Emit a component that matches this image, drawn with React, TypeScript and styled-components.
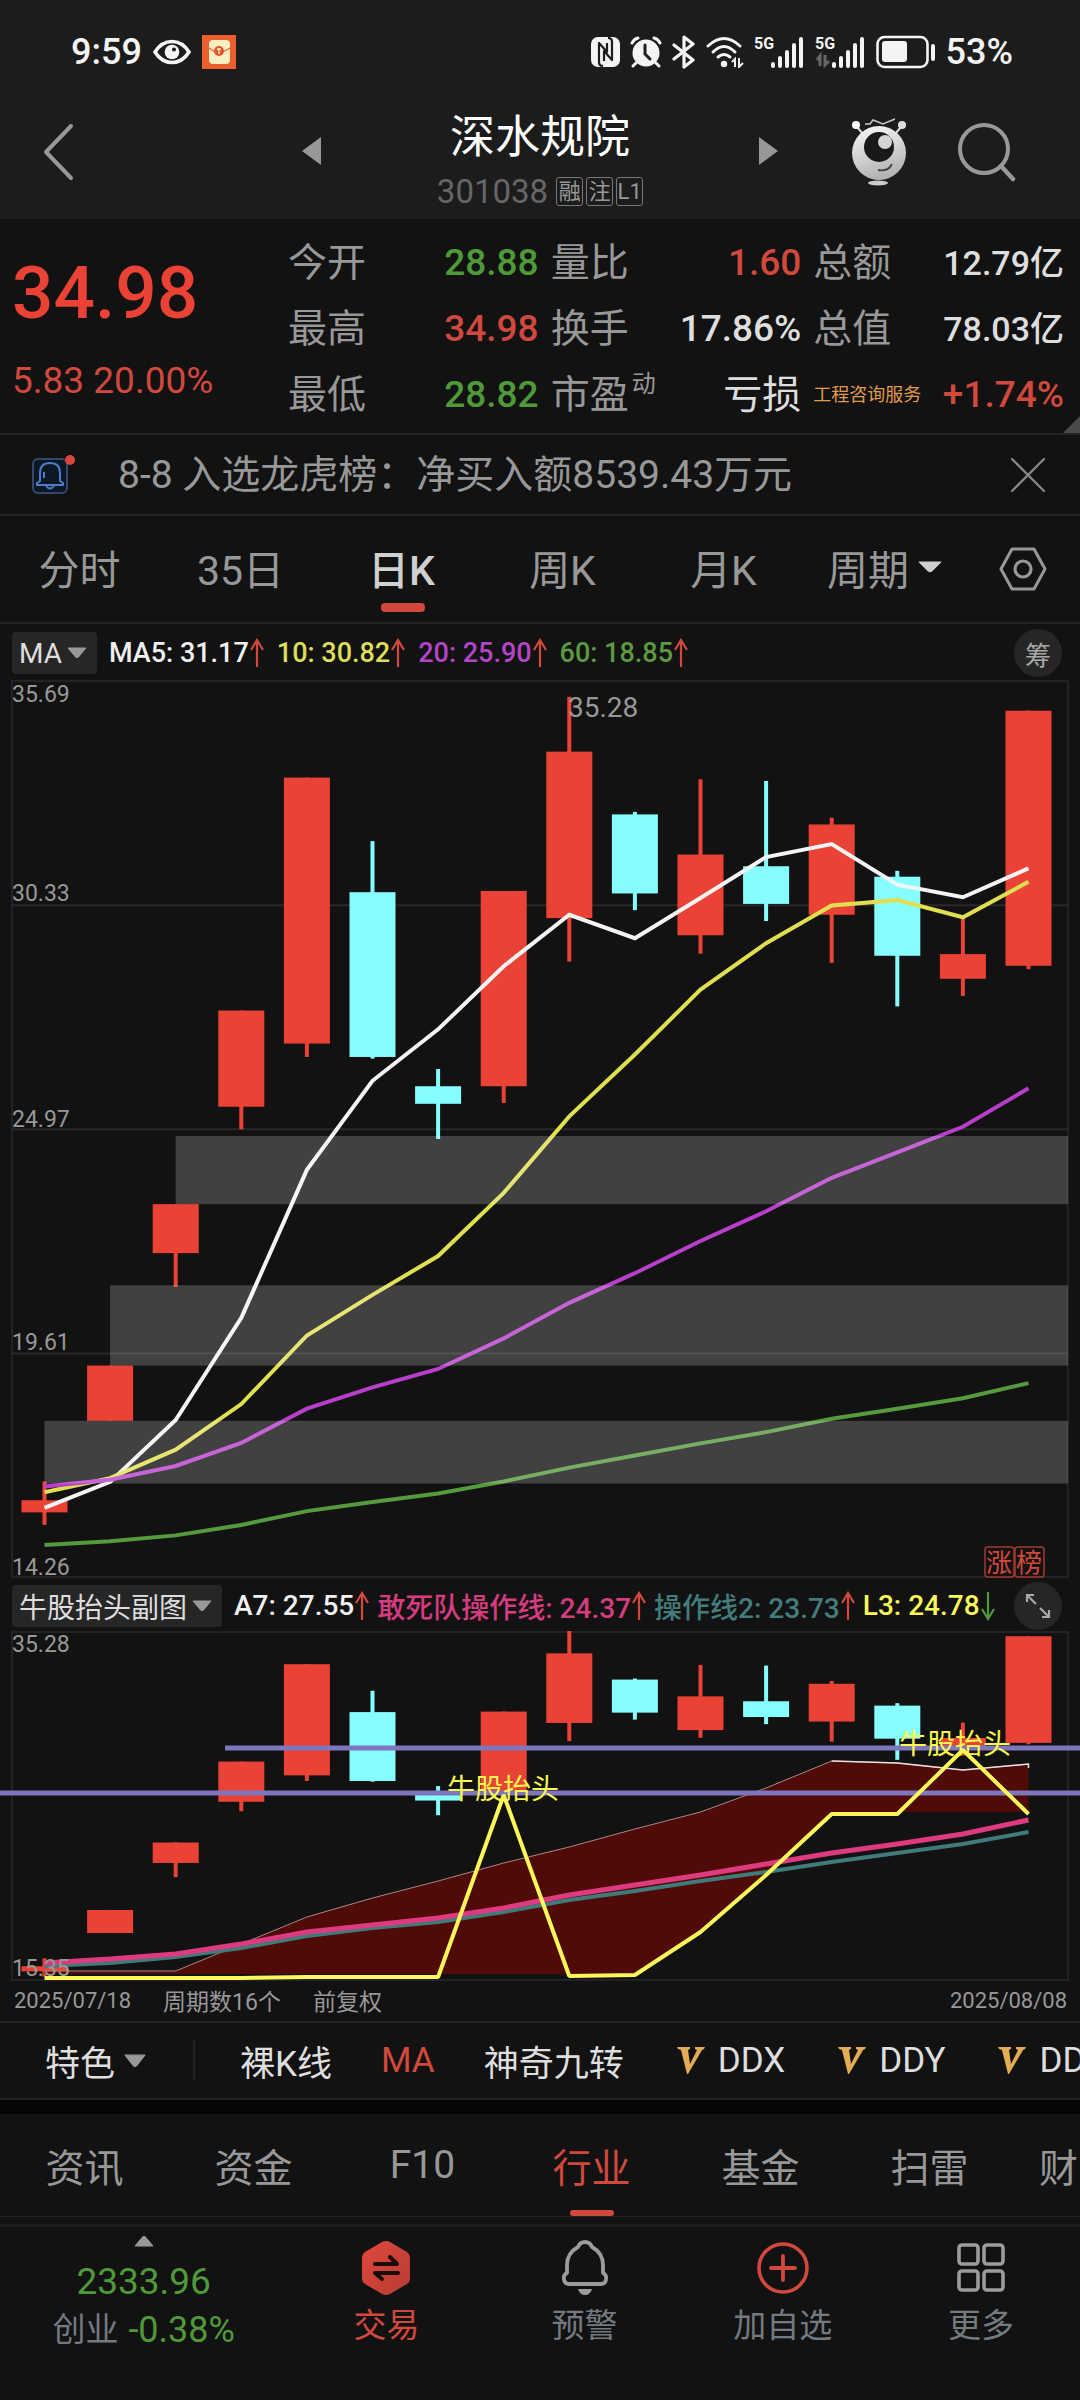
import React from 'react';
import styled, { createGlobalStyle } from 'styled-components';

const color = {
  page: '#121212',
  header: '#1c1c1c',
  line: '#232323',
  chip: '#262626',
  grey: '#989898',
  slate: '#737a80',
  light: '#dedede',
  red: '#d1483d',
  candleRed: '#ea4335',
  candleCyan: '#86feff',
  green: '#4f9a38',
};

const GlobalStyle = createGlobalStyle`
  * { box-sizing: border-box; }
  body {
    margin: 0;
    background: ${color.page};
    color: ${color.light};
    font-family: Roboto, "Noto Sans CJK SC", sans-serif;
  }
  button {
    margin: 0;
    padding: 0;
    border: 0;
    background: none;
    color: inherit;
    font: inherit;
    white-space: nowrap;
    cursor: pointer;
  }
  svg { display: block; flex: none; }
  h1, p, dl, dt, dd { margin: 0; font-weight: 400; }
`;

const Page = styled.main`
  display: flex;
  flex-direction: column;
  min-height: 100vh;
  overflow: hidden;
`;

/* ---------- header ---------- */

const Header = styled.header`
  background: ${color.header};
`;

const StatusBar = styled.div`
  display: flex;
  align-items: center;
  justify-content: space-between;
  height: 104px;
  padding: 0 67px 0 71px;
  color: #f4f4f4;
  font-size: 36px;
  font-weight: 500;
`;

const StatusGroup = styled.div<{ $gap: number }>`
  display: flex;
  align-items: center;
  gap: ${(p) => p.$gap}px;
`;

const TitleBar = styled.div`
  display: flex;
  align-items: center;
  height: 115px;
`;

const TitleSide = styled.div<{ $end?: boolean }>`
  display: flex;
  flex: 1;
  align-items: center;
  justify-content: ${(p) => (p.$end ? 'flex-end' : 'flex-start')};
  gap: 48px;
  padding: 0 64px 19px 42px;
`;

const TitleCenter = styled.div`
  display: flex;
  align-items: center;
  justify-content: space-between;
  width: 476px;
`;

const StepButton = styled.button`
  padding-bottom: 21px;
`;

const TitleBlock = styled.div`
  display: flex;
  flex-direction: column;
  align-items: center;
`;

const StockName = styled.h1`
  color: #fff;
  font-size: 45px;
  line-height: 60px;
`;

const CodeRow = styled.div`
  display: flex;
  align-items: center;
  gap: 3px;
  height: 48px;
  color: #666;
  font-size: 33px;
`;

const Code = styled.span`
  margin-right: 5px;
`;

const CodeTag = styled.span`
  width: 27px;
  height: 29px;
  border: 1px solid #777;
  border-radius: 3px;
  color: ${color.grey};
  font-size: 22px;
  line-height: 27px;
  text-align: center;
`;

/* ---------- quote ---------- */

const Quote = styled.section`
  position: relative;
  display: flex;
  height: 216px;
  padding: 11px 16px 0 12px;
  border-bottom: 2px solid ${color.line};
`;

const PriceColumn = styled.div`
  width: 276px;
  padding-top: 19px;
  color: ${color.red};
`;

const Price = styled.p`
  margin-bottom: 22px;
  color: ${color.candleRed};
  font-size: 73px;
  font-weight: 500;
  line-height: 88px;
`;

const Change = styled.p`
  font-size: 37px;
  line-height: 44px;
`;

const Stats = styled.dl`
  display: grid;
  flex: 1;
  grid-template-columns: repeat(3, 1fr);
  grid-auto-rows: 66px;
  column-gap: 12px;
`;

const Stat = styled.div`
  display: flex;
  align-items: center;
  justify-content: space-between;
  line-height: 66px;
  white-space: nowrap;
`;

const StatLabel = styled.dt<{ $small?: boolean }>`
  color: ${(p) => (p.$small ? '#e09b4c' : color.grey)};
  font-size: ${(p) => (p.$small ? 18 : 39)}px;
`;

const Sup = styled.sup`
  margin-left: 3px;
  font-size: 24px;
  line-height: 24px;
  vertical-align: 16px;
`;

const StatValue = styled.dd<{ $tone: string; $small?: boolean; $cjk?: boolean }>`
  height: 66px;
  color: ${(p) => p.$tone};
  font-size: ${(p) => (p.$cjk ? 39 : p.$small ? 34 : 37)}px;
  font-weight: ${(p) => (p.$cjk ? 400 : 500)};
`;

const Corner = styled.span`
  position: absolute;
  right: 0;
  bottom: 0;
  border-bottom: 17px solid #4a4a4a;
  border-left: 17px solid transparent;
`;

const Notice = styled.section`
  display: flex;
  align-items: center;
  height: 81px;
  padding: 0 34px 0 30px;
  border-bottom: 2px solid ${color.line};
  color: ${color.grey};
`;

const NoticeLink = styled.a`
  flex: 1;
  margin-left: 40px;
  color: inherit;
  font-size: 39px;
  line-height: 78px;
  text-decoration: none;
`;

/* ---------- period tabs ---------- */

const PeriodTabs = styled.nav`
  display: flex;
  height: 108px;
  border-bottom: 2px solid ${color.line};
`;

const Tab = styled.button<{ $active?: boolean }>`
  position: relative;
  display: flex;
  flex: 1;
  align-items: center;
  justify-content: center;
  gap: 9px;
  padding: 0 2px 4px 0;
  color: ${(p) => (p.$active ? '#d0d0d0' : color.grey)};
  font-size: 41px;
  font-weight: ${(p) => (p.$active ? 500 : 400)};
`;

const Underline = styled.span`
  position: absolute;
  bottom: 10px;
  left: calc(50% - 22px);
  width: 44px;
  height: 9px;
  border-radius: 4px;
  background: ${color.red};
`;

const SettingsButton = styled.button`
  display: flex;
  align-items: center;
  justify-content: center;
  width: 114px;
`;

/* ---------- charts ---------- */

const IndicatorRow = styled.div<{ $height: number; $size: number }>`
  display: flex;
  align-items: center;
  gap: 12px;
  height: ${(p) => p.$height}px;
  padding: 2px 18px 0 12px;
  font-size: ${(p) => p.$size}px;
  white-space: nowrap;
`;

const Chip = styled.button`
  display: flex;
  align-items: center;
  gap: 5px;
  height: 42px;
  padding: 0 10px 0 7px;
  border-radius: 4px;
  background: ${color.chip};
  font-size: 28px;
`;

const Readings = styled.div<{ $gap: number }>`
  display: flex;
  gap: ${(p) => p.$gap}px;
`;

const Reading = styled.span<{ $tone: string }>`
  display: flex;
  align-items: center;
  gap: 1px;
  color: ${(p) => p.$tone};
  font-weight: 500;
`;

const RoundButton = styled.button`
  display: flex;
  align-items: center;
  justify-content: center;
  width: 48px;
  height: 48px;
  margin-left: auto;
  border-radius: 50%;
  background: ${color.chip};
  color: #a8a8a8;
  font-size: 26px;
`;

const ChartBox = styled.div`
  svg {
    width: 100%;
    height: auto;
  }
`;

const ChartFooter = styled.div`
  display: flex;
  align-items: center;
  gap: 32px;
  height: 42px;
  padding: 0 13px 2px 14px;
  border-bottom: 2px solid ${color.line};
  color: ${color.grey};
  font-size: 23px;
`;

const FooterDate = styled.time<{ $end?: boolean }>`
  margin-left: ${(p) => (p.$end ? 'auto' : '0')};
  font-size: 22px;
`;

/* ---------- feature strip and section tabs ---------- */

const FeatureStrip = styled.div`
  display: flex;
  align-items: center;
  height: 77px;
  padding-left: 45px;
  overflow: hidden;
  border-bottom: 2px solid ${color.line};
  font-size: 35px;
`;

const FeaturePicker = styled.button`
  display: flex;
  align-items: center;
  gap: 9px;
  height: 41px;
  padding-right: 47px;
  border-right: 2px solid ${color.line};
`;

const Features = styled.div`
  display: flex;
  gap: 49px;
  padding-left: 45px;
`;

const Feature = styled.button<{ $active?: boolean; $vip?: boolean }>`
  display: flex;
  flex: none;
  align-items: center;
  gap: 13px;
  padding-left: ${(p) => (p.$vip ? 4 : 0)}px;
  color: ${(p) => (p.$active ? color.red : color.light)};
`;

const Gap = styled.div`
  height: 14px;
  background: #060606;
`;

const SectionTabs = styled.nav`
  display: flex;
  height: 103px;
  overflow: hidden;
  border-bottom: 1px solid ${color.line};
`;

const SectionTab = styled.button<{ $active?: boolean }>`
  position: relative;
  flex: 0 0 169px;
  color: ${(p) => (p.$active ? color.red : color.grey)};
  font-size: 39px;

  &:last-child {
    flex-basis: auto;
    padding-left: 25px;
  }
`;

const SectionUnderline = styled(Underline)`
  bottom: 0;
  height: 6px;
  border-radius: 3px;
`;

/* ---------- bottom bar ---------- */

const BottomBar = styled.nav`
  display: grid;
  flex: 1;
  grid-template-columns: 29fr repeat(4, 20fr);
  align-items: start;
  margin-top: 7px;
  padding-top: 8px;
  border-top: 3px solid #1c1c1c;
`;

const IndexButton = styled.button`
  display: flex;
  flex-direction: column;
  align-items: center;
  color: ${color.green};
`;

const IndexValue = styled.span`
  margin-top: 13px;
  font-size: 37px;
  line-height: 44px;
`;

const IndexChange = styled.span`
  display: flex;
  align-items: center;
  gap: 10px;
  margin-top: 4px;
  font-size: 36px;
  line-height: 44px;
`;

const IndexName = styled.span`
  color: ${color.slate};
  font-size: 33px;
`;

const Action = styled.button<{ $active?: boolean }>`
  display: flex;
  flex-direction: column;
  align-items: center;
  gap: 6px;
  padding-top: 5px;
  color: ${(p) => (p.$active ? color.red : color.slate)};
  font-size: 33px;
  line-height: 48px;
`;

/* ---------- icons ---------- */

const Caret = ({ w, h, fill = color.grey, up }: { w: number; h: number; fill?: string; up?: boolean }) => (
  <svg width={w} height={h} viewBox="0 0 20 12" preserveAspectRatio="none" aria-hidden="true">
    <path
      d={up ? 'M1 11H19L11.500 2Q10 .5 8.500 2Z' : 'M1 1H19L11.500 10Q10 11.500 8.500 10Z'}
      fill={fill}
      stroke={fill}
      strokeLinejoin="round"
    />
  </svg>
);

const Trend = ({ down }: { down?: boolean }) => (
  <svg width="14" height="30" viewBox="0 0 14 30" aria-hidden="true">
    <path
      d={down ? 'M7 1V28M1 18L7 28L13 18' : 'M7 29V2M1 12L7 2L13 12'}
      fill="none"
      stroke={down ? '#4f9a38' : '#d1483d'}
      strokeWidth="2.200"
    />
  </svg>
);

const EyeIcon = () => (
  <svg width="40" height="28" viewBox="0 0 40 28" aria-hidden="true">
    <path d="M3 14C8 6 14 3.500 20 3.500S32 6 37 14C32 22 26 24.500 20 24.500S8 22 3 14Z" fill="none" stroke="#f4f4f4" strokeWidth="3.600" />
    <circle cx="20" cy="14" r="7.300" fill="#f4f4f4" />
    <circle cx="22" cy="11.500" r="2" fill={color.header} />
  </svg>
);

const EnvelopeIcon = () => (
  <svg width="34" height="34" viewBox="0 0 34 34" aria-hidden="true">
    <rect width="34" height="34" fill="#ea5f2d" />
    <rect x="7" y="5" width="21" height="24" rx="4" fill="#fdeec0" />
    <path d="M7 13Q17 21 28 13" fill="none" stroke="#e0683a" strokeWidth="1.500" />
    <circle cx="17" cy="16" r="5" fill="#d9592a" />
    <path d="M15 14H19M17 14V19" stroke="#fdeec0" strokeWidth="1.400" />
  </svg>
);

const NfcIcon = () => (
  <svg width="29" height="30" viewBox="0 0 29 30" aria-hidden="true">
    <rect width="29" height="30" rx="7" fill="#f4f4f4" />
    <path
      d="M13 24V14L21 23V5Q21 1 17 1M16 6V15L8 6V25Q8 29 12 29"
      fill="none"
      stroke={color.header}
      strokeWidth="2.200"
      strokeLinejoin="round"
    />
  </svg>
);

const AlarmIcon = () => (
  <svg width="32" height="32" viewBox="0 0 32 32" aria-hidden="true">
    <circle cx="16" cy="17" r="13.500" fill="#f4f4f4" />
    <path d="M2 7Q4 3 8 2M30 7Q28 3 24 2M6 27L3 30M26 27L29 30" stroke="#f4f4f4" strokeWidth="3" strokeLinecap="round" fill="none" />
    <path d="M15 9V18L20 23" fill="none" stroke={color.header} strokeWidth="3" strokeLinecap="round" />
  </svg>
);

const BluetoothIcon = () => (
  <svg width="24" height="34" viewBox="0 0 24 34" aria-hidden="true">
    <path d="M2 10L21 25L12 32V2L21 9L2 24" fill="none" stroke="#f4f4f4" strokeWidth="3.200" strokeLinejoin="round" strokeLinecap="round" />
  </svg>
);

const WifiIcon = () => (
  <svg width="38" height="32" viewBox="0 0 38 32" aria-hidden="true">
    <g fill="none" stroke="#f4f4f4" strokeWidth="3" strokeLinecap="round">
      <path d="M2 10Q18 -5 34 10" />
      <path d="M7 16Q18 5 29 16" />
      <path d="M12 21Q18 16 24 21" />
    </g>
    <circle cx="18" cy="28" r="3.200" fill="#f4f4f4" />
    <path d="M26 26L29 23V31M37 27L33 31V22" fill="none" stroke="#f4f4f4" strokeWidth="2" />
  </svg>
);

const SignalIcon = ({ transfer }: { transfer?: boolean }) => (
  <svg width="51" height="34" viewBox="0 0 51 34" aria-hidden="true">
    <text x="0" y="14" fill="#f4f4f4" fontSize="16" fontWeight="700">5G</text>
    {transfer && <path d="M2 25L5 21V31M14 26L10 30V20" fill="none" stroke="#666" strokeWidth="3" />}
    {[6, 12, 18, 25, 31].map((h, i) => (
      <rect key={h} x={17 + i * 7} y={33 - h} width="4" height={h} rx="2" fill="#f4f4f4" />
    ))}
  </svg>
);

const BatteryIcon = () => (
  <svg width="60" height="34" viewBox="0 0 60 34" aria-hidden="true">
    <rect x="1.500" y="2" width="50" height="30" rx="7" fill="none" stroke="#f4f4f4" strokeWidth="2.600" />
    <rect x="6" y="6" width="25" height="21" rx="3" fill="#f4f4f4" />
    <rect x="55" y="9" width="4" height="17" rx="2" fill="#f4f4f4" />
  </svg>
);

const BackIcon = () => (
  <svg width="32" height="58" viewBox="0 0 32 58" aria-hidden="true">
    <path d="M29 3L4 29L29 55" fill="none" stroke={color.grey} strokeWidth="4" strokeLinecap="round" strokeLinejoin="round" />
  </svg>
);

const StepIcon = ({ right }: { right?: boolean }) => (
  <svg width="20" height="28" viewBox="0 0 20 28" aria-hidden="true">
    <path d={right ? 'M1 0V28L20 14Z' : 'M19 0V28L0 14Z'} fill={color.grey} />
  </svg>
);

const RobotIcon = () => (
  <svg width="58" height="68" viewBox="0 0 58 68" aria-hidden="true">
    <defs>
      <linearGradient id="ball" x1="0" y1="0" x2="0.300" y2="1">
        <stop offset="0" stopColor="#fafafa" />
        <stop offset="1" stopColor="#b4b4b4" />
      </linearGradient>
    </defs>
    <path d="M15 6H20L23 2L33 6L45 1" fill="none" stroke="#c8c8c8" strokeWidth="1.500" />
    <path d="M6 8L14 17M52 8L44 17" stroke="#ddd" strokeWidth="2" />
    <circle cx="6" cy="7" r="4" fill="#fff" />
    <circle cx="52" cy="7" r="4" fill="#ddd" />
    <circle cx="29" cy="35" r="27" fill="url(#ball)" />
    <circle cx="29" cy="29" r="15" fill="#191919" />
    <circle cx="35" cy="24" r="7" fill="#d4d4d4" />
    <path d="M28 52Q38 54 42 46" fill="none" stroke="#444" strokeWidth="1.800" />
    <ellipse cx="28" cy="65" rx="10" ry="2.500" fill="#ccc" />
  </svg>
);

const SearchIcon = () => (
  <svg width="60" height="60" viewBox="0 0 60 60" aria-hidden="true">
    <circle cx="28" cy="27" r="24" fill="none" stroke={color.grey} strokeWidth="4" />
    <path d="M45 44L57 57" stroke={color.grey} strokeWidth="4.500" strokeLinecap="round" />
  </svg>
);

const NoticeBell = () => (
  <svg width="48" height="42" viewBox="0 0 48 42" aria-hidden="true">
    <rect x="3" y="5" width="34" height="34" rx="5" fill="#0e1726" stroke="#33496b" strokeWidth="2" />
    <g fill="none" stroke="#4a7fc8" strokeWidth="2" strokeLinejoin="round">
      <path d="M10 27V19Q10 9 20 9T30 19V27L33 29V31H7V29Z" />
      <path d="M16 32Q20 37 24 32M14 18V24" />
    </g>
    <circle cx="40" cy="6" r="5" fill="#d9483e" />
  </svg>
);

const CloseIcon = () => (
  <svg width="36" height="36" viewBox="0 0 36 36" aria-hidden="true">
    <path d="M2 2L34 34M34 2L2 34" stroke="#858585" strokeWidth="2.400" strokeLinecap="round" />
  </svg>
);

const HexIcon = () => (
  <svg width="48" height="44" viewBox="0 0 48 44" aria-hidden="true">
    <path d="M13 2H35L46 22L35 42H13L2 22Z" fill="none" stroke={color.grey} strokeWidth="3" strokeLinejoin="round" />
    <circle cx="24" cy="22" r="8" fill="none" stroke={color.grey} strokeWidth="3.200" />
  </svg>
);

const ExpandIcon = () => (
  <svg width="26" height="26" viewBox="0 0 26 26" aria-hidden="true">
    <path d="M11 11L2 2M2 9V2H9M15 15L24 24M24 17V24H17" fill="none" stroke="#a8a8a8" strokeWidth="2.200" />
  </svg>
);

const VipIcon = () => (
  <svg width="28" height="27" viewBox="0 0 28 27" aria-hidden="true">
    <path d="M0 0H13V2L11 3L13 17L20 3L18 2V0H28L27 2L25 3L11 27H10L4 3L1 2Z" fill="#e2ab55" />
  </svg>
);

const TradeIcon = () => (
  <svg width="50" height="56" viewBox="0 0 50 56" aria-hidden="true">
    <defs>
      <linearGradient id="hex" x1="0" y1="0" x2="1" y2="1">
        <stop offset="0" stopColor="#e2483c" />
        <stop offset="1" stopColor="#b53b33" />
      </linearGradient>
    </defs>
    <path d="M21 2Q25 0 29 2L46 12Q49 14 49 17V39Q49 42 46 44L29 54Q25 56 21 54L4 44Q1 42 1 39V17Q1 14 4 12Z" fill="url(#hex)" />
    <path d="M14 24H36L29 17M37 33H14L21 39" fill="none" stroke="#1a0c0b" strokeWidth="4" strokeLinecap="round" strokeLinejoin="round" />
  </svg>
);

const AlertIcon = () => (
  <svg width="50" height="56" viewBox="0 0 50 56" aria-hidden="true">
    <path
      d="M25 2Q30 2 32 7Q43 13 43 25V33Q47 35 46 40Q45 44 41 44H9Q5 44 4 40Q3 35 7 33V25Q7 13 18 7Q20 2 25 2Z"
      fill="none"
      stroke="#9c9c9c"
      strokeWidth="3.800"
      strokeLinejoin="round"
    />
    <path d="M18 49H32Q30 55 25 55T18 49Z" fill="#9c9c9c" />
  </svg>
);

const AddIcon = () => (
  <svg width="54" height="56" viewBox="0 0 54 56" aria-hidden="true">
    <circle cx="27" cy="28" r="24" fill="none" stroke={color.red} strokeWidth="3.600" />
    <path d="M27 16V40M15 28H39" stroke={color.red} strokeWidth="3.800" strokeLinecap="round" />
  </svg>
);

const MoreIcon = () => (
  <svg width="50" height="56" viewBox="0 0 50 56" aria-hidden="true">
    <g fill="none" stroke="#9c9c9c" strokeWidth="3.600">
      <rect x="3" y="5" width="19" height="19" rx="3" />
      <rect x="28" y="5" width="19" height="19" rx="3" />
      <rect x="3" y="31" width="19" height="19" rx="3" />
      <rect x="28" y="31" width="19" height="19" rx="3" />
    </g>
  </svg>
);

/* ---------- chart data ---------- */

type Candle = { top: number; bottom: number; high: number; low: number; up: boolean };

const candle = (top: number, bottom: number, high: number, low: number, up = true): Candle => ({ top, bottom, high, low, up });

const candles: Candle[] = [
  candle(16.1, 15.81, 16.55, 15.51),
  candle(19.32, 18.0, 19.32, 18.0),
  candle(23.18, 22.01, 23.18, 21.2),
  candle(27.81, 25.51, 27.81, 24.97),
  candle(33.38, 27.02, 33.38, 26.7),
  candle(30.64, 26.7, 31.86, 26.66, false),
  candle(26.0, 25.58, 26.41, 24.74, false),
  candle(30.67, 26.0, 30.67, 25.6),
  candle(34.0, 30.02, 35.31, 28.98),
  candle(32.5, 30.61, 32.56, 30.21, false),
  candle(31.54, 29.61, 33.34, 29.17),
  candle(31.26, 30.36, 33.3, 29.95, false),
  candle(32.26, 30.1, 32.42, 28.95),
  candle(31.01, 29.12, 31.15, 27.91, false),
  candle(29.16, 28.57, 30.04, 28.16),
  candle(34.98, 28.88, 34.98, 28.8),
];

const averages = [
  { stroke: '#f4f4f4', values: [15.92, 16.54, 18.02, 20.46, 24.0, 26.13, 27.36, 28.87, 30.1, 29.54, 30.5, 31.48, 31.79, 30.82, 30.52, 31.21] },
  { stroke: '#e0df50', values: [16.29, 16.63, 17.31, 18.4, 20.04, 21.01, 21.94, 23.45, 25.28, 26.76, 28.31, 29.42, 30.32, 30.45, 30.04, 30.89] },
  { stroke: '#b83fcc', values: [16.43, 16.59, 16.92, 17.47, 18.29, 18.8, 19.24, 19.97, 20.82, 21.53, 22.3, 23.01, 23.81, 24.42, 25.03, 25.95] },
  { stroke: '#559a3c', values: [15.03, 15.12, 15.26, 15.51, 15.84, 16.06, 16.26, 16.55, 16.88, 17.17, 17.46, 17.73, 18.05, 18.29, 18.54, 18.9] },
];

const gapBands = [
  { from: 2, top: 24.81, bottom: 23.18 },
  { from: 1, top: 21.24, bottom: 19.32 },
  { from: 0, top: 18.0, bottom: 16.5 },
];

const signal = {
  pink: [332, 328, 323, 313, 301, 294, 287, 277, 264, 254, 244, 233, 222, 213, 203, 189],
  teal: [335, 332, 326, 317, 305, 297, 291, 281, 269, 260, 250, 241, 231, 222, 213, 201],
  yellow: [347, 347, 347, 347, 346, 346, 346, 164, 345, 344, 301, 244, 183, 183, 119, 183],
  ridge: [340, 340, 340, 313, 286, 267, 250, 232, 216, 198, 181, 157, 130, 132, 139, 133],
  floor: [343, 343, 343, 343, 343, 343, 343, 343, 343, 343, 301, 244, 181, 181, 181, 181],
};

const xAt = (i: number) => 44.5 + i * 65.6;
const linePoints = (ys: number[]) => ys.map((y, i) => `${xAt(i)},${y}`).join(' ');

const Candles = ({ scale }: { scale: (price: number) => number }) => (
  <>
    {candles.map((c, i) => {
      const fill = c.up ? color.candleRed : color.candleCyan;
      return (
        <g key={i} fill={fill}>
          <rect x={xAt(i) - 2} y={scale(c.high)} width="4" height={scale(c.low) - scale(c.high)} />
          <rect x={xAt(i) - 23} y={scale(c.top)} width="46" height={scale(c.bottom) - scale(c.top)} />
        </g>
      );
    })}
  </>
);

const MainChart = () => {
  const scale = (price: number) => 1 + (35.69 - price) * 41.82;
  const labels: [string, number][] = [
    ['35.69', 22],
    ['30.33', 221],
    ['24.97', 447],
    ['19.61', 670],
    ['14.26', 895],
  ];
  return (
    <svg viewBox="0 0 1080 898" role="img" aria-label="日K线图">
      <rect x="12" y="1" width="1056" height="896" fill="none" stroke={color.line} strokeWidth="2" />
      {[30.33, 24.97, 19.61].map((p) => (
        <line key={p} x1="12" x2="1068" y1={scale(p)} y2={scale(p)} stroke="#292929" strokeWidth="2" />
      ))}
      {labels.map(([text, y]) => (
        <text key={text} x="12" y={y} fill={color.grey} fontSize="23">{text}</text>
      ))}
      <Candles scale={scale} />
      {averages.map((a) => (
        <polyline key={a.stroke} points={linePoints(a.values.map(scale))} fill="none" stroke={a.stroke} strokeWidth="4" />
      ))}
      {gapBands.map((b) => (
        <rect key={b.from} x={xAt(b.from)} y={scale(b.top)} width={1068 - xAt(b.from)} height={scale(b.bottom) - scale(b.top)} fill="#fff" fillOpacity="0.200" />
      ))}
      <text x="568" y="37" fill={color.grey} fontSize="28">35.28</text>
      {['涨', '榜'].map((t, i) => (
        <g key={t}>
          <rect x={985 + i * 30} y="867" width="29" height="30" rx="3" fill={color.page} stroke="#a33a31" strokeWidth="1.500" />
          <text x={999 + i * 30} y="892" fill={color.red} fontSize="26" textAnchor="middle">{t}</text>
        </g>
      ))}
    </svg>
  );
};

const SubChart = () => {
  const scale = (price: number) => (35.28 - price) * 17.48;
  const area = `${linePoints(signal.ridge)} ${signal.floor.map((y, i) => `${xAt(i)},${y}`).reverse().join(' ')}`;
  return (
    <svg viewBox="0 0 1080 350" role="img" aria-label="牛股抬头副图">
      <rect x="12" y="1" width="1056" height="348" fill="none" stroke={color.line} strokeWidth="2" />
      <Candles scale={scale} />
      <polygon points={area} fill="#500a07" />
      <polyline points={linePoints(signal.ridge)} fill="none" stroke="#a88" strokeWidth="1" />
      <polyline points={`${xAt(12)},130 ${xAt(13)},132 ${xAt(14)},139 ${xAt(15)},133 ${xAt(15)},137`} fill="none" stroke="#e8dede" strokeWidth="1.500" />
      <polyline points={linePoints(signal.teal)} fill="none" stroke="#3f7b7b" strokeWidth="4" />
      <polyline points={linePoints(signal.pink)} fill="none" stroke="#dd3a80" strokeWidth="5" />
      <text x="12" y="21" fill={color.grey} fontSize="23">35.28</text>
      <text x="12" y="345" fill={color.grey} fontSize="23">15.35</text>
      <path d="M225 117H1080M0 162H1080" stroke="#7d76bd" strokeWidth="5" />
      <g fill="#fbf84e" fontSize="28">
        <text x="447" y="168">牛股抬头</text>
        <text x="899" y="123">牛股抬头</text>
      </g>
      <polyline points={linePoints(signal.yellow)} fill="none" stroke="#fbf75a" strokeWidth="4" strokeLinejoin="bevel" />
    </svg>
  );
};

/* ---------- page ---------- */

type StatItem = { label: string; value: string; tone: string; sup?: string; cjk?: boolean; smallLabel?: boolean; smallValue?: boolean };

const stats: StatItem[] = [
  { label: '今开', value: '28.88', tone: color.green },
  { label: '量比', value: '1.60', tone: color.red },
  { label: '总额', value: '12.79亿', tone: color.light, smallValue: true },
  { label: '最高', value: '34.98', tone: color.red },
  { label: '换手', value: '17.86%', tone: color.light },
  { label: '总值', value: '78.03亿', tone: color.light, smallValue: true },
  { label: '最低', value: '28.82', tone: color.green },
  { label: '市盈', value: '亏损', tone: color.light, sup: '动', cjk: true },
  { label: '工程咨询服务', value: '+1.74%', tone: color.red, smallLabel: true },
];

const mainReadings = [
  { text: 'MA5: 31.17', tone: '#f0f0f0' },
  { text: '10: 30.82', tone: '#dedd5c' },
  { text: '20: 25.90', tone: '#b345c6' },
  { text: '60: 18.85', tone: '#5c9a42' },
];

const subReadings = [
  { text: 'A7: 27.55', tone: '#f0f0f0' },
  { text: '敢死队操作线: 24.37', tone: '#d63c7f' },
  { text: '操作线2: 23.73', tone: '#427d7b' },
  { text: 'L3: 24.78', tone: '#fbf75a', down: true },
];

const features = [
  { text: '裸K线' },
  { text: 'MA', active: true },
  { text: '神奇九转' },
  { text: 'DDX', vip: true },
  { text: 'DDY', vip: true },
  { text: 'DDZ', vip: true },
];

const actions = [
  { text: '交易', icon: <TradeIcon />, active: true },
  { text: '预警', icon: <AlertIcon /> },
  { text: '加自选', icon: <AddIcon /> },
  { text: '更多', icon: <MoreIcon /> },
];

export default function App() {
  return (
    <Page>
      <GlobalStyle />
      <Header>
        <StatusBar>
          <StatusGroup $gap={10}>
            <span>9:59</span>
            <EyeIcon />
            <EnvelopeIcon />
          </StatusGroup>
          <StatusGroup $gap={10}>
            <NfcIcon />
            <AlarmIcon />
            <BluetoothIcon />
            <WifiIcon />
            <SignalIcon />
            <SignalIcon transfer />
            <BatteryIcon />
            <span>53%</span>
          </StatusGroup>
        </StatusBar>
        <TitleBar>
          <TitleSide>
            <button aria-label="返回"><BackIcon /></button>
          </TitleSide>
          <TitleCenter>
            <StepButton aria-label="上一只"><StepIcon /></StepButton>
            <TitleBlock>
              <StockName>深水规院</StockName>
              <CodeRow>
                <Code>301038</Code>
                <CodeTag>融</CodeTag>
                <CodeTag>注</CodeTag>
                <CodeTag>L1</CodeTag>
              </CodeRow>
            </TitleBlock>
            <StepButton aria-label="下一只"><StepIcon right /></StepButton>
          </TitleCenter>
          <TitleSide $end>
            <button aria-label="助手"><RobotIcon /></button>
            <button aria-label="搜索"><SearchIcon /></button>
          </TitleSide>
        </TitleBar>
      </Header>

      <Quote>
        <PriceColumn>
          <Price>34.98</Price>
          <Change>5.83 20.00%</Change>
        </PriceColumn>
        <Stats>
          {stats.map((s) => (
            <Stat key={s.label}>
              <StatLabel $small={s.smallLabel}>
                {s.label}
                {s.sup && <Sup>{s.sup}</Sup>}
              </StatLabel>
              <StatValue $tone={s.tone} $small={s.smallValue} $cjk={s.cjk}>{s.value}</StatValue>
            </Stat>
          ))}
        </Stats>
        <Corner />
      </Quote>

      <Notice>
        <NoticeBell />
        <NoticeLink href="#notice">8-8 入选龙虎榜：净买入额8539.43万元</NoticeLink>
        <button aria-label="关闭"><CloseIcon /></button>
      </Notice>

      <PeriodTabs>
        {['分时', '35日', '日K', '周K', '月K'].map((t) => (
          <Tab key={t} $active={t === '日K'}>
            {t}
            {t === '日K' && <Underline />}
          </Tab>
        ))}
        <Tab>
          周期
          <Caret w={24} h={12} fill="#cfcfcf" />
        </Tab>
        <SettingsButton aria-label="设置"><HexIcon /></SettingsButton>
      </PeriodTabs>

      <IndicatorRow $height={56} $size={27}>
        <Chip>
          MA
          <Caret w={20} h={12} />
        </Chip>
        <Readings $gap={13}>
          {mainReadings.map((r) => (
            <Reading key={r.text} $tone={r.tone}>
              {r.text}
              <Trend />
            </Reading>
          ))}
        </Readings>
        <RoundButton>筹</RoundButton>
      </IndicatorRow>
      <ChartBox><MainChart /></ChartBox>

      <IndicatorRow $height={53} $size={28}>
        <Chip>
          牛股抬头副图
          <Caret w={20} h={12} />
        </Chip>
        <Readings $gap={8}>
          {subReadings.map((r) => (
            <Reading key={r.text} $tone={r.tone}>
              {r.text}
              <Trend down={r.down} />
            </Reading>
          ))}
        </Readings>
        <RoundButton aria-label="全屏"><ExpandIcon /></RoundButton>
      </IndicatorRow>
      <ChartBox><SubChart /></ChartBox>

      <ChartFooter>
        <FooterDate>2025/07/18</FooterDate>
        <span>周期数16个</span>
        <span>前复权</span>
        <FooterDate $end>2025/08/08</FooterDate>
      </ChartFooter>

      <FeatureStrip>
        <FeaturePicker>
          特色
          <Caret w={22} h={14} />
        </FeaturePicker>
        <Features>
          {features.map((f) => (
            <Feature key={f.text} $active={f.active} $vip={f.vip}>
              {f.vip && <VipIcon />}
              {f.text}
            </Feature>
          ))}
        </Features>
      </FeatureStrip>
      <Gap />
      <SectionTabs>
        {['资讯', '资金', 'F10', '行业', '基金', '扫雷', '财'].map((t) => (
          <SectionTab key={t} $active={t === '行业'}>
            {t}
            {t === '行业' && <SectionUnderline />}
          </SectionTab>
        ))}
      </SectionTabs>

      <BottomBar>
        <IndexButton>
          <Caret w={20} h={12} up />
          <IndexValue>2333.96</IndexValue>
          <IndexChange>
            <IndexName>创业</IndexName>
            -0.38%
          </IndexChange>
        </IndexButton>
        {actions.map((a) => (
          <Action key={a.text} $active={a.active}>
            {a.icon}
            {a.text}
          </Action>
        ))}
      </BottomBar>
    </Page>
  );
}
